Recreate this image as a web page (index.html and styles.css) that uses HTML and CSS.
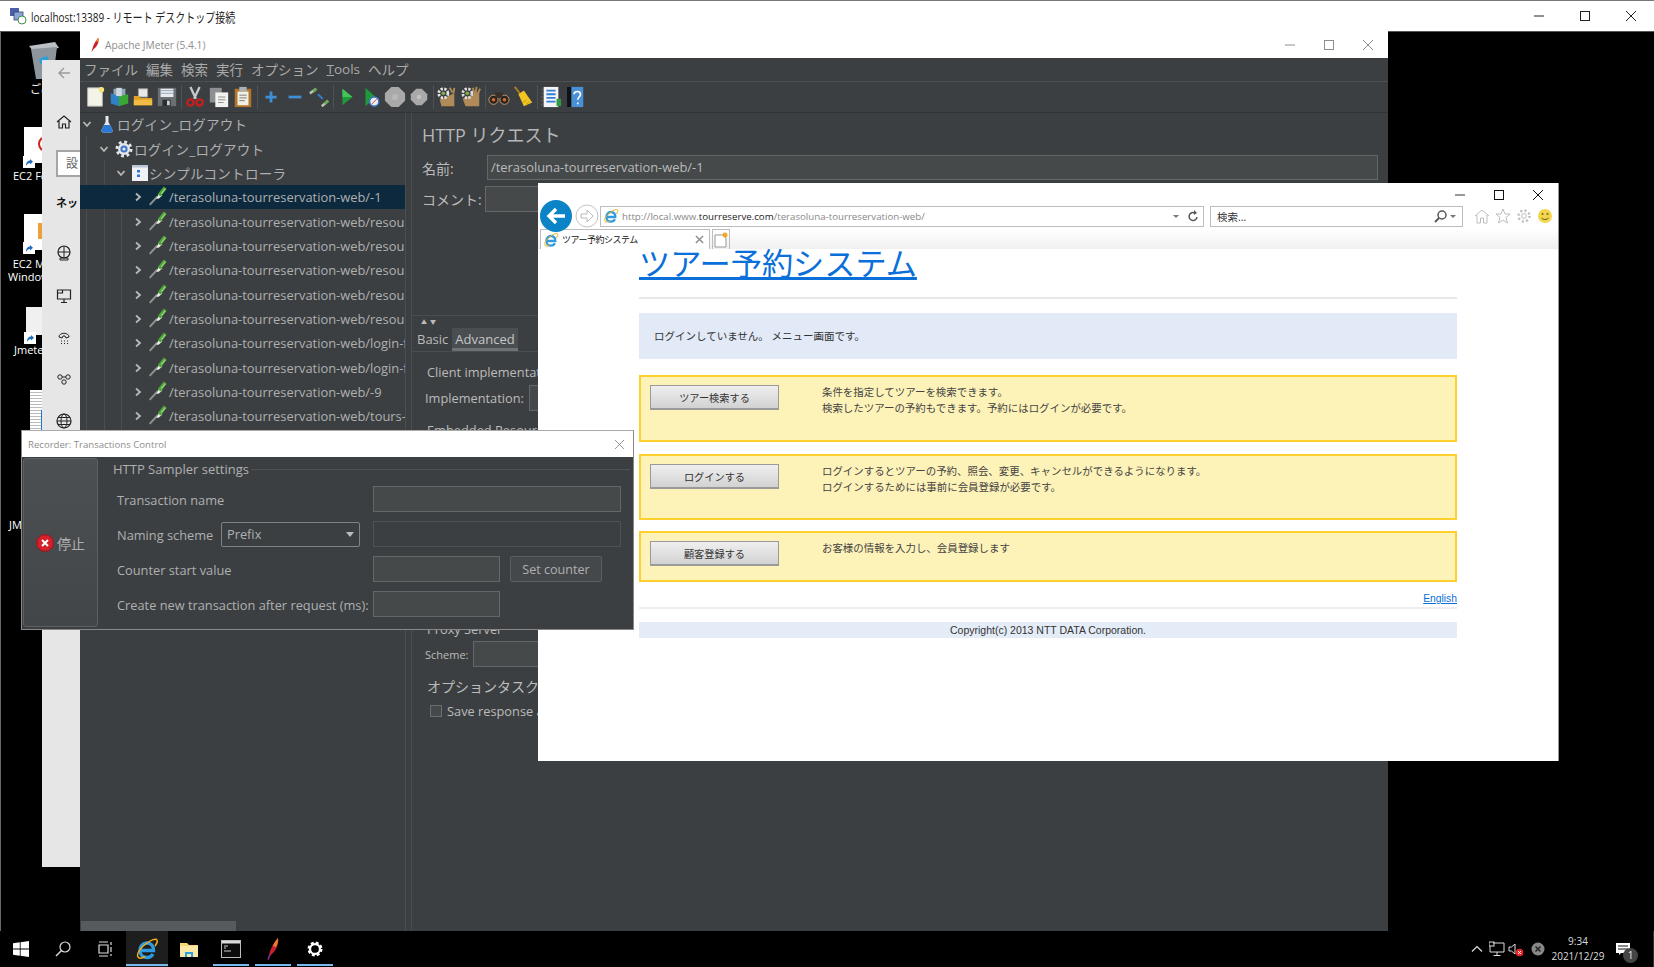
FILE: index.html
```html
<!DOCTYPE html>
<html lang="ja">
<head>
    <meta charset="utf-8">
    <title>localhost:13389 - リモート デスクトップ接続</title>
    <link rel="stylesheet" href="styles.css">
</head>
<body>
    <svg class="defs" width="0" height="0">
        <symbol id="ie" viewBox="0 0 24 24">
            <path d="M5 13.5h13.5c.3-4.500-2.500-7.500-6.500-7.500-4.200 0-7 3.300-7 7.500s2.900 7 7 7c2.800 0 4.800-1.300 5.900-3.500" fill="none" stroke="#2f9be0" stroke-width="3.400"/>
            <path d="M3 20c-2-3 3-10 9-14 4-3 9-5 10-3 .8 1.500-.5 4-2 6M3 20c1.500 2 4.500 1 7-.5" fill="none" stroke="#f2b21b" stroke-width="1.500"/>
        </symbol>
        <symbol id="pipette" viewBox="0 0 18 18">
            <path d="M1.500 17l7-7.500" stroke="#8f9290" stroke-width="1.800"/>
            <path d="M7.500 11.500l2-4 3.500 1-3.500 3z" fill="#e8f0e2"/>
            <path d="M10 8.500l5.500-7" stroke="#4fa53b" stroke-width="3.400"/>
            <path d="M12 7l3.500-4.500" stroke="#a8dd8f" stroke-width="1"/>
        </symbol>
        <symbol id="gear" viewBox="0 0 18 18">
            <circle cx="9" cy="9" r="7" fill="none" stroke="#e4e6ea" stroke-width="3" stroke-dasharray="2.800 2.700"/>
            <circle cx="9" cy="9" r="6" fill="#e4e6ea"/>
            <circle cx="9" cy="9" r="3.600" fill="#3f78c8"/>
            <circle cx="9" cy="9" r="1.600" fill="#dfe8f5"/>
        </symbol>
        <symbol id="chev-r" viewBox="0 0 10 10"><path d="M3 1.500L7 5 3 8.500" fill="none" stroke="#b8b8b8" stroke-width="1.800"/></symbol>
        <symbol id="chev-d" viewBox="0 0 10 10"><path d="M1.500 3L5 7l3.500-4" fill="none" stroke="#b8b8b8" stroke-width="1.800"/></symbol>
        <symbol id="shortcut" viewBox="0 0 12 12">
            <rect width="12" height="12" fill="#fff"/>
            <path d="M3 10c0-4 2-5.500 4-5.500V3l3 2.800-3 2.700V7C5.500 7 4 8 3 10z" fill="#1f6fc0"/>
        </symbol>
    </svg>

    <div class="screen">
        <div class="rdp-title">
            <svg class="rdp-logo" viewBox="0 0 18 18" width="18" height="18">
                <rect x="1" y="1" width="9" height="8" fill="#4a5fa8"/>
                <rect x="5" y="5" width="9" height="8" fill="#8aa3d8" stroke="#39476f" stroke-width=".8"/>
                <circle cx="13" cy="13" r="4" fill="#fff" stroke="#3f8f3f"/>
            </svg>
            <span class="rdp-name">localhost:13389 - リモート デスクトップ接続</span>
            <div class="rdp-controls">
                <svg viewBox="0 0 12 12" width="12" height="12"><path d="M1 6h10" stroke="#222"/></svg>
                <svg viewBox="0 0 12 12" width="12" height="12"><rect x="1.500" y="1.500" width="9" height="9" fill="none" stroke="#222"/></svg>
                <svg viewBox="0 0 12 12" width="12" height="12"><path d="M1 1l10 10M11 1L1 11" stroke="#222"/></svg>
            </div>
        </div>
        <div class="desktop"></div>

        <!-- デスクトップアイコン -->
        <svg class="desk-icon bin" viewBox="0 0 34 40" width="34" height="40">
            <path d="M2 6l26-4 4 6-26 3z" fill="#b9bfc4"/>
            <path d="M4 9l26-2-4 32H9z" fill="#8d969c"/>
            <path d="M14 18l6-2 2 5-3 4-5-1-2-4z" fill="#2a9fd8"/>
        </svg>
        <span class="desk-label l-bin">ごみ</span>
        <div class="desk-icon doc d-fe"><span class="o-mark"></span></div>
        <svg class="desk-icon sc s-fe" width="12" height="12"><use href="#shortcut"/></svg>
        <span class="desk-label l-fe">EC2 Fe</span>
        <div class="desk-icon doc d-m"><span class="orange"></span></div>
        <svg class="desk-icon sc s-m" width="12" height="12"><use href="#shortcut"/></svg>
        <span class="desk-label l-m">EC2 M<br>Window</span>
        <div class="desk-icon doc d-j"></div>
        <svg class="desk-icon sc s-j" width="12" height="12"><use href="#shortcut"/></svg>
        <span class="desk-label l-j">Jmeter</span>
        <div class="desk-icon lined"></div>
        <div class="desk-icon bluebar"></div>
        <span class="desk-label l-jm">JM</span>

        <!-- 設定ウィンドウ(奥) -->
        <div class="win settings-win">
            <svg class="set-icon" viewBox="0 0 16 24" width="16" height="24"><path d="M14 12H3m5-5l-5 5 5 5" fill="none" stroke="#9a9a9a" stroke-width="1.400"/></svg>
            <svg class="set-icon set-home" viewBox="0 0 16 24" width="16" height="24"><path d="M1 12l7-6 7 6M3 11v7h3.500v-4h3v4H13v-7" fill="none" stroke="#222" stroke-width="1.200"/></svg>
            <div class="set-search">設</div>
            <div class="set-head">ネット</div>
            <div class="set-nav">
                <svg viewBox="0 0 16 24" width="16" height="24"><circle cx="8" cy="11" r="6" fill="none" stroke="#222" stroke-width="1.200"/><path d="M2 11h12M8 5v12M4 17h8v2H4z" fill="none" stroke="#222"/></svg>
                <svg viewBox="0 0 16 24" width="16" height="24"><path d="M1.500 7h13v9h-13zM8 16v3M5 19.500h6M1.500 7h5v3h-5z" fill="none" stroke="#222" stroke-width="1.200"/></svg>
                <svg viewBox="0 0 16 24" width="16" height="24"><path d="M3 12c0-5 10-5 10 0l-3 1-1-2H7l-1 2zM5 16h1m2 0h1m2 0h1M5 18.500h1m2 0h1m2 0h1" fill="none" stroke="#222"/></svg>
                <svg viewBox="0 0 16 24" width="16" height="24"><circle cx="4" cy="10" r="2.200" fill="none" stroke="#222"/><circle cx="12" cy="10" r="2.200" fill="none" stroke="#222"/><circle cx="8" cy="15" r="2.200" fill="none" stroke="#222"/><path d="M6 10h4" stroke="#222"/></svg>
                <svg viewBox="0 0 16 24" width="16" height="24"><circle cx="8" cy="12" r="7" fill="none" stroke="#222" stroke-width="1.200"/><ellipse cx="8" cy="12" rx="3" ry="7" fill="none" stroke="#222"/><path d="M1 12h14M2 8.500h12M2 15.500h12" stroke="#222"/></svg>
            </div>
        </div>

        <!-- JMeter -->
        <div class="win jmeter">
            <div class="jm-title">
                <svg class="feather" viewBox="0 0 14 20" width="12" height="17"><path d="M3 19c1-6 4-13 8-17 1 5-1 10-6 14z" fill="#c8202f"/><path d="M8 6c1-2 2-3 3-4 .5 2 0 3-1 5z" fill="#e9872a"/></svg>
                <span>Apache JMeter (5.4.1)</span>
                <div class="jm-controls">
                    <svg viewBox="0 0 12 12" width="12" height="12"><path d="M1 6h10" stroke="#8e8e8e"/></svg>
                    <svg viewBox="0 0 12 12" width="12" height="12"><rect x="1.500" y="1.500" width="9" height="9" fill="none" stroke="#8e8e8e"/></svg>
                    <svg viewBox="0 0 12 12" width="12" height="12"><path d="M1 1l10 10M11 1L1 11" stroke="#8e8e8e"/></svg>
                </div>
            </div>
            <div class="jm-menu">
                <span>ファイル</span><span>編集</span><span>検索</span><span>実行</span><span>オプション</span><span><u>T</u>ools</span><span>ヘルプ</span>
            </div>
            <div class="jm-toolbar">
                <svg viewBox="0 0 24 24"><path d="M4 2h16v20H4z" fill="#f4f3e8" stroke="#bbb"/><circle cx="19" cy="4" r="3" fill="#f6e27a"/></svg>
                <svg viewBox="0 0 24 24"><path d="M6 3h13v8H6z" fill="#8ea6bd"/><path d="M3 8l9 3v11l-9-3z" fill="#2f80c4"/><path d="M12 11l10-2v10l-10 3z" fill="#38a832"/><path d="M9 2h6v9H9z" fill="#cfd8df"/></svg>
                <svg viewBox="0 0 24 24"><path d="M7 3h10v9H7z" fill="#e8e8e8" stroke="#999"/><path d="M2 11h6l1 2h13v8H2z" fill="#e0a126"/><path d="M2 15h20v6H2z" fill="#f3bc45"/></svg>
                <svg viewBox="0 0 24 24"><path d="M2 2h20v20H2z" fill="#6b6f73"/><path d="M5 3h14v9H5z" fill="#e8eaec"/><path d="M5 5h14M5 8h14" stroke="#8fa6bd"/><path d="M7 15h9v7H7z" fill="#2b2d2f"/><rect x="12" y="16" width="3" height="5" fill="#cfd2d5"/></svg>
                <i class="sep"></i>
                <svg viewBox="0 0 24 24"><path d="M7 1l6 13M17 1l-6 13" stroke="#c6cacd" stroke-width="2.500"/><circle cx="7" cy="18" r="3.500" fill="none" stroke="#c81e1e" stroke-width="2.500"/><circle cx="17" cy="18" r="3.500" fill="none" stroke="#c81e1e" stroke-width="2.500"/></svg>
                <svg viewBox="0 0 24 24"><path d="M2 2h13v16H2z" fill="#8d9093"/><path d="M8 7h14v16H8z" fill="#f2f2f0"/><path d="M11 12h8M11 15h8M11 18h6" stroke="#888"/></svg>
                <svg viewBox="0 0 24 24"><path d="M3 3h18v20H3z" fill="#b27428"/><path d="M6 6h12v15H6z" fill="#f2f0e4"/><path d="M8 10h8M8 13h8M8 16h6" stroke="#777"/><path d="M8 1h8v5H8z" fill="#aab0b5"/></svg>
                <i class="sep"></i>
                <svg viewBox="0 0 24 24"><path d="M12 6v12M6 12h12" stroke="#3f8fd6" stroke-width="3"/></svg>
                <svg viewBox="0 0 24 24"><path d="M5 12h14" stroke="#3f8fd6" stroke-width="3"/></svg>
                <svg viewBox="0 0 24 24"><path d="M2 8l7-5M15 22l7-6" stroke="#b7c2b0" stroke-width="2.800"/><path d="M6 6l3-3M18 19l4-3" stroke="#6aa84f" stroke-width="2.800"/><path d="M11 9l5 5" stroke="#2f80d6" stroke-width="2"/></svg>
                <i class="sep"></i>
                <svg viewBox="0 0 24 24"><path d="M7 3l11 9-11 9z" fill="#1f9a3a"/><path d="M7 3l11 9H7z" fill="#43c35a"/></svg>
                <svg viewBox="0 0 24 24"><path d="M6 2l11 10L6 22z" fill="#1f9a3a"/><circle cx="15.500" cy="17" r="5" fill="#e9eef5" stroke="#3a74c8" stroke-width="1.600"/><path d="M12.500 20l6-6" stroke="#d33"/></svg>
                <svg viewBox="0 0 24 24"><path d="M8 1h8l7 7v8l-7 7H8l-7-7V8z" fill="#a9a9a9"/><path d="M9 9h6v6H9z" fill="#b8b8b8"/></svg>
                <svg viewBox="0 0 24 24"><path d="M9 3h6l6 6v6l-6 6H9l-6-6V9z" fill="#a9a9a9"/><circle cx="12" cy="12" r="2.500" fill="#c2c2c2"/></svg>
                <i class="sep"></i>
                <svg viewBox="0 0 24 24"><path d="M4 15L20 8v14H6z" fill="#b08a58"/><circle cx="8" cy="8" r="5" fill="none" stroke="#e4e4e4" stroke-width="3" stroke-dasharray="2.500 1.500"/><circle cx="8" cy="8" r="2" fill="#7fb04b"/><path d="M15 2l3 5M20 2l-1 6" stroke="#b08a58" stroke-width="2"/></svg>
                <svg viewBox="0 0 24 24"><path d="M3 14L21 6v16H6z" fill="#b08a58"/><circle cx="8" cy="8" r="5" fill="none" stroke="#dcdcdc" stroke-width="3" stroke-dasharray="2.500 1.500"/><circle cx="8" cy="8" r="2" fill="#7fb04b"/><path d="M14 2l2 7M18 1l-1 8M22 3l-3 6" stroke="#b08a58" stroke-width="2"/></svg>
                <i class="sep"></i>
                <svg viewBox="0 0 24 24"><circle cx="6" cy="15" r="5" fill="#2b2320" stroke="#caa27a"/><circle cx="18" cy="15" r="5" fill="#2b2320" stroke="#caa27a"/><circle cx="6" cy="15" r="2" fill="#d8692b"/><circle cx="18" cy="15" r="2" fill="#d8692b"/><path d="M8 7h8v6H8z" fill="#3a2f2a"/></svg>
                <svg viewBox="0 0 24 24"><path d="M3 1l7 9" stroke="#a9782c" stroke-width="2.200"/><path d="M7 9l6-4 9 13-9 4z" fill="#f2c522"/><path d="M12 18l4-3M15 20l4-3" stroke="#c8960c"/></svg>
                <i class="sep"></i>
                <svg viewBox="0 0 24 24"><path d="M4 1h16v22H4z" fill="#f4f4f4"/><path d="M7 5h10M7 9h10M7 13h10M7 17h10" stroke="#2f7fd6" stroke-width="2"/><path d="M2 3v18" stroke="#555" stroke-width="2" stroke-dasharray="2 2"/><path d="M18 14h5v8h-5z" fill="#2f9a45"/></svg>
                <svg viewBox="0 0 24 24"><path d="M3 1h18v22H3z" fill="#4a90d6"/><path d="M3 1h5v22H3z" fill="#111"/><path d="M11 9c0-4 7-4 7 0 0 3-3 3-3 6M15 18v2" fill="none" stroke="#fff" stroke-width="1.800"/></svg>
            </div>
            <div class="jm-main">
                <div class="tree">
                    <div class="tree-row lv-0"><svg class="tw" width="10" height="10"><use href="#chev-d"/></svg><svg class="ti" viewBox="0 0 18 18" width="18" height="18"><path d="M7.500 1h3v6l4 8c.4 1.500-.5 2.500-1.500 2.500H5c-1 0-2-1-1.500-2.500l4-8z" fill="#e6e9ee"/><path d="M6 10h6l2.500 5c.4 1.500-.5 2.500-1.500 2.500H5c-1 0-2-1-1.500-2.500z" fill="#2a78d6"/></svg>ログイン_ログアウト</div>
                    <div class="tree-row lv-1"><svg class="tw" width="10" height="10"><use href="#chev-d"/></svg><svg class="ti" width="18" height="18"><use href="#gear"/></svg>ログイン_ログアウト</div>
                    <div class="tree-row lv-2"><svg class="tw" width="10" height="10"><use href="#chev-d"/></svg><svg class="ti" viewBox="0 0 16 16" width="16" height="16"><rect x="0" y="0" width="16" height="16" fill="#f0f2f5"/><rect x="0" y="0" width="16" height="2.500" fill="#b9c6d6"/><path d="M5 5h3v2.500H5zM5 9.500h3V12H5z" fill="#2a78d6"/></svg>シンプルコントローラ</div>
                    <div class="tree-row lv-3 selected"><svg class="tw" width="10" height="10"><use href="#chev-r"/></svg><svg class="ti" width="18" height="18"><use href="#pipette"/></svg>/terasoluna-tourreservation-web/-1</div>
                    <div class="tree-row lv-3"><svg class="tw" width="10" height="10"><use href="#chev-r"/></svg><svg class="ti" width="18" height="18"><use href="#pipette"/></svg>/terasoluna-tourreservation-web/resources/app</div>
                    <div class="tree-row lv-3"><svg class="tw" width="10" height="10"><use href="#chev-r"/></svg><svg class="ti" width="18" height="18"><use href="#pipette"/></svg>/terasoluna-tourreservation-web/resources/app</div>
                    <div class="tree-row lv-3"><svg class="tw" width="10" height="10"><use href="#chev-r"/></svg><svg class="ti" width="18" height="18"><use href="#pipette"/></svg>/terasoluna-tourreservation-web/resources/app</div>
                    <div class="tree-row lv-3"><svg class="tw" width="10" height="10"><use href="#chev-r"/></svg><svg class="ti" width="18" height="18"><use href="#pipette"/></svg>/terasoluna-tourreservation-web/resources/app</div>
                    <div class="tree-row lv-3"><svg class="tw" width="10" height="10"><use href="#chev-r"/></svg><svg class="ti" width="18" height="18"><use href="#pipette"/></svg>/terasoluna-tourreservation-web/resources/app</div>
                    <div class="tree-row lv-3"><svg class="tw" width="10" height="10"><use href="#chev-r"/></svg><svg class="ti" width="18" height="18"><use href="#pipette"/></svg>/terasoluna-tourreservation-web/login-form</div>
                    <div class="tree-row lv-3"><svg class="tw" width="10" height="10"><use href="#chev-r"/></svg><svg class="ti" width="18" height="18"><use href="#pipette"/></svg>/terasoluna-tourreservation-web/login-form</div>
                    <div class="tree-row lv-3"><svg class="tw" width="10" height="10"><use href="#chev-r"/></svg><svg class="ti" width="18" height="18"><use href="#pipette"/></svg>/terasoluna-tourreservation-web/-9</div>
                    <div class="tree-row lv-3"><svg class="tw" width="10" height="10"><use href="#chev-r"/></svg><svg class="ti" width="18" height="18"><use href="#pipette"/></svg>/terasoluna-tourreservation-web/tours-search</div>
                    <div class="tree-scroll"></div>
                </div>
                <div class="splitter"></div>
                <div class="pane">
                    <h2 class="pane-title">HTTP リクエスト</h2>
                    <div class="pane-field name-field">
                        <label class="name-label">名前:</label>
                        <div class="dark-input name-input">/terasoluna-tourreservation-web/-1</div>
                    </div>
                    <div class="pane-field comment-field">
                        <label class="comment-label">コメント:</label>
                        <div class="dark-input comment-input"></div>
                    </div>
                    <div class="pane-divider"><span>▲</span><span>▼</span></div>
                    <div class="tabs">
                        <span class="tab">Basic</span>
                        <span class="tab active">Advanced</span>
                    </div>
                    <div class="group-title client-title">Client implementation</div>
                    <div class="pane-field impl-field">
                        <label class="impl-label">Implementation:</label>
                        <div class="dark-input small-input"></div>
                    </div>
                    <div class="group-title embedded-title">Embedded Resources</div>
                    <div class="group-title proxy-title">Proxy Server</div>
                    <div class="pane-field scheme-field">
                        <label class="scheme-label">Scheme:</label>
                        <div class="dark-input small-input"></div>
                    </div>
                    <div class="group-title option-title">オプションタスク</div>
                    <div class="check-row"><i class="checkbox"></i>Save response as MD5 hash?</div>
                </div>
            </div>
        </div>

        <!-- IE -->
        <div class="win browser">
            <div class="ie-caption">
                <svg viewBox="0 0 12 12" width="12" height="12"><path d="M1 6h10" stroke="#333"/></svg>
                <svg viewBox="0 0 12 12" width="12" height="12"><rect x="1.500" y="1.500" width="9" height="9" fill="none" stroke="#111"/></svg>
                <svg viewBox="0 0 12 12" width="12" height="12"><path d="M1 1l10 10M11 1L1 11" stroke="#111"/></svg>
            </div>
            <div class="ie-nav">
                <svg class="ie-back" viewBox="0 0 32 32" width="32" height="32"><circle cx="16" cy="16" r="16" fill="#0a84c6"/><path d="M25 16H9m7-7l-7 7 7 7" fill="none" stroke="#fff" stroke-width="3.400"/></svg>
                <svg class="ie-forward" viewBox="0 0 24 24" width="24" height="24"><circle cx="12" cy="12" r="11" fill="#fff" stroke="#c4c4c4"/><path d="M6 10h6V6l6 6-6 6v-4H6z" fill="none" stroke="#b8b8b8"/></svg>
                <div class="ie-address">
                    <svg width="16" height="16"><use href="#ie"/></svg>
                    <span class="url">http://local.www.<b>tourreserve.com</b>/terasoluna-tourreservation-web/</span>
                    <svg viewBox="0 0 10 10" width="10" height="10"><path d="M2 4h6L5 7z" fill="#777"/></svg>
                    <svg class="ie-reload" viewBox="0 0 12 12" width="12" height="12"><path d="M10 7a4 4 0 1 1-2-4" fill="none" stroke="#555" stroke-width="1.500"/><path d="M7 0l3 3-3 2z" fill="#555"/></svg>
                </div>
                <div class="ie-search">
                    <span>検索...</span>
                    <svg viewBox="0 0 14 14" width="14" height="14"><circle cx="8" cy="6" r="4" fill="none" stroke="#555" stroke-width="1.500"/><path d="M5 9l-4 4" stroke="#555" stroke-width="1.800"/></svg>
                    <svg viewBox="0 0 10 10" width="10" height="10"><path d="M2 4h6L5 7z" fill="#777"/></svg>
                </div>
                <div class="ie-tools">
                    <svg viewBox="0 0 16 16" width="16" height="16"><path d="M1 8l7-6 7 6M3 7v8h3.500v-5h3v5H13V7" fill="none" stroke="#bdbdbd"/></svg>
                    <svg viewBox="0 0 16 16" width="16" height="16"><path d="M8 1l2 5h5l-4 3.500 1.500 5.500L8 12l-4.500 3L5 9.500 1 6h5z" fill="none" stroke="#bdbdbd"/></svg>
                    <svg viewBox="0 0 16 16" width="16" height="16"><circle cx="8" cy="8" r="5.500" fill="none" stroke="#bdbdbd" stroke-width="2.400" stroke-dasharray="2 2.300"/><circle cx="8" cy="8" r="2.400" fill="none" stroke="#bdbdbd"/></svg>
                    <svg viewBox="0 0 16 16" width="16" height="16"><circle cx="8" cy="8" r="7" fill="#f2d64b"/><circle cx="5.500" cy="6" r="1" fill="#6d6420"/><circle cx="10.500" cy="6" r="1" fill="#6d6420"/><path d="M4.500 10c1.500 2 5.500 2 7 0" fill="none" stroke="#6d6420"/></svg>
                </div>
            </div>
            <div class="ie-tabs">
                <div class="ie-tab">
                    <svg width="16" height="16"><use href="#ie"/></svg>
                    <span>ツアー予約システム</span>
                    <svg class="ie-tab-close" viewBox="0 0 10 10" width="9" height="9"><path d="M1 1l8 8M9 1L1 9" stroke="#8a8a8a" stroke-width="1.500"/></svg>
                </div>
                <div class="ie-newtab"><svg viewBox="0 0 14 16" width="14" height="16"><path d="M1 3h8l3 3v9H1z" fill="#fff" stroke="#999"/><circle cx="11" cy="3" r="2.500" fill="#f5a623"/></svg></div>
            </div>
            <div class="ie-page">
                <div class="site">
                    <h1 class="site-title"><a href="#">ツアー予約システム</a></h1>
                    <p class="notice">ログインしていません。 メニュー画面です。</p>
                    <div class="menu-card card-a">
                        <button class="menu-btn">ツアー検索する</button>
                        <p>条件を指定してツアーを検索できます。<br>検索したツアーの予約もできます。予約にはログインが必要です。</p>
                    </div>
                    <div class="menu-card card-b">
                        <button class="menu-btn">ログインする</button>
                        <p>ログインするとツアーの予約、照会、変更、キャンセルができるようになります。<br>ログインするためには事前に会員登録が必要です。</p>
                    </div>
                    <div class="menu-card card-c">
                        <button class="menu-btn">顧客登録する</button>
                        <p>お客様の情報を入力し、会員登録します</p>
                    </div>
                    <div class="lang"><a href="#">English</a></div>
                    <div class="copyright">Copyright(c) 2013 NTT DATA Corporation.</div>
                </div>
            </div>
        </div>

        <!-- Recorder -->
        <div class="win recorder">
            <div class="rec-title">
                <span>Recorder: Transactions Control</span>
                <svg viewBox="0 0 12 12" width="11" height="11"><path d="M1 1l10 10M11 1L1 11" stroke="#8e8e8e"/></svg>
            </div>
            <div class="rec-body">
                <div class="stop-btn">
                    <svg viewBox="0 0 18 18" width="18" height="18"><path d="M5.500 1h7L17 5.500v7L12.500 17h-7L1 12.500v-7z" fill="#d3202a" stroke="#a31018"/><path d="M6 6l6 6M12 6l-6 6" stroke="#fff" stroke-width="2"/></svg>
                    <span>停止</span>
                </div>
                <div class="rec-settings">
                    <div class="legend"><span>HTTP Sampler settings</span></div>
                    <div class="rec-row first">
                        <label>Transaction name</label>
                        <div class="dark-input wide"></div>
                    </div>
                    <div class="rec-row">
                        <label class="with-select">Naming scheme
                            <span class="select">Prefix<svg viewBox="0 0 10 10" width="10" height="10"><path d="M1 3h8L5 8z" fill="#bbb"/></svg></span>
                        </label>
                        <div class="dark-input wide flat"></div>
                    </div>
                    <div class="rec-row">
                        <label>Counter start value</label>
                        <div class="dark-input short"></div>
                        <button class="set-counter">Set counter</button>
                    </div>
                    <div class="rec-row">
                        <label>Create new transaction after request (ms):</label>
                        <div class="dark-input short"></div>
                    </div>
                </div>
            </div>
        </div>

        <!-- タスクバー -->
        <div class="taskbar">
            <div class="tb-item">
                <svg viewBox="0 0 16 16" width="16" height="16"><path d="M0 2.300L6.800 1.300V7.600H0zM7.600 1.200L16 0V7.600H7.600zM0 8.400H6.800V14.700L0 13.700zM7.600 8.400H16V16L7.600 14.800z" fill="#fff"/></svg>
            </div>
            <div class="tb-item">
                <svg viewBox="0 0 16 16" width="16" height="16"><circle cx="10" cy="6" r="5" fill="none" stroke="#ddd" stroke-width="1.200"/><path d="M6.500 9.500L1 15" stroke="#ddd" stroke-width="1.400"/></svg>
            </div>
            <div class="tb-item">
                <svg viewBox="0 0 16 16" width="16" height="16"><path d="M2 4h9v8H2zM2 1h9M2 15h9M14 1v3M14 6v5M14 13v2" fill="none" stroke="#ddd" stroke-width="1.200"/></svg>
            </div>
            <div class="tb-item active running"><svg width="24" height="24"><use href="#ie"/></svg></div>
            <div class="tb-item">
                <svg viewBox="0 0 20 18" width="20" height="18"><path d="M1 3h7l2 2h9v12H1z" fill="#f7d774"/><path d="M1 6h18v11H1z" fill="#fbe8a6"/><path d="M6 12h8v5H6z" fill="#2d9fe0"/><path d="M8 14h4v3H8z" fill="#fbe8a6"/></svg>
            </div>
            <div class="tb-item running">
                <svg viewBox="0 0 20 18" width="20" height="18"><rect x=".5" y=".5" width="19" height="17" fill="#0c0c0c" stroke="#bbb"/><rect x="1" y="1" width="18" height="2.500" fill="#ddd"/><path d="M3 6h4M3 8h2M3 11h7" stroke="#ccc"/></svg>
            </div>
            <div class="tb-item running">
                <svg viewBox="0 0 14 24" width="14" height="24"><path d="M2 23c1-7 4-16 10-22 1 6-2 13-7 17z" fill="#c8202f"/><path d="M7 9c1-3 3-6 5-8 .5 3-.5 6-2 9z" fill="#ea7e2c"/><path d="M2 23l2-6" stroke="#6a2a8a" stroke-width="1.500"/></svg>
            </div>
            <div class="tb-item running">
                <svg viewBox="0 0 20 20" width="18" height="18"><circle cx="10" cy="10" r="6.500" fill="none" stroke="#fff" stroke-width="3.600" stroke-dasharray="3 2.100"/><circle cx="10" cy="10" r="5.500" fill="none" stroke="#fff" stroke-width="2.400"/></svg>
            </div>
            <div class="tray">
                <div class="tray-item w20"><svg viewBox="0 0 12 12" width="12" height="12"><path d="M1 8.500L6 3.500l5 5" fill="none" stroke="#ddd" stroke-width="1.200"/></svg></div>
                <div class="tray-item w20"><svg viewBox="0 0 16 16" width="16" height="16"><path d="M4 2h11v9H1V5M8 11v3M4.500 14.500h7" fill="none" stroke="#ddd"/><rect x="0" y="1" width="5" height="4" fill="none" stroke="#ddd"/></svg></div>
                <div class="tray-item w18"><svg viewBox="0 0 16 16" width="16" height="16"><path d="M1 6h2.500L7 3v10L3.500 10H1z" fill="none" stroke="#ddd"/><circle cx="11.500" cy="11.500" r="3.800" fill="#e22"/><path d="M10 10l3 3M13 10l-3 3" stroke="#fff"/></svg></div>
                <div class="tray-item w26"><svg viewBox="0 0 14 14" width="14" height="14"><circle cx="7" cy="7" r="6.500" fill="#888"/><path d="M4.500 4.500l5 5M9.500 4.500l-5 5" stroke="#222" stroke-width="1.500"/></svg></div>
                <div class="clock"><span>9:34</span><span>2021/12/29</span></div>
                <div class="tray-notify">
                    <svg viewBox="0 0 16 16" width="16" height="16"><path d="M1 2h14v10H6l-2 2v-2H1z" fill="#fff"/><path d="M3 5h10M3 8h10" stroke="#111"/></svg>
                    <span class="notify-badge">1</span>
                </div>
            </div>
        </div>
    </div>
</body>
</html>
```

FILE: styles.css
```css
* {
    box-sizing: border-box;
}

html, body {
    margin: 0;
    padding: 0;
    overflow: hidden;
}

.defs {
    position: absolute;
}

.screen {
    position: relative;
    display: flex;
    flex-direction: column;
    width: 1654px;
    height: 967px;
    font-family: "Open Sans", "Noto Sans CJK JP", sans-serif;
    overflow: hidden;
}

/* リモートデスクトップの枠 */
.rdp-title {
    display: flex;
    align-items: center;
    height: 32px;
    flex: none;
    padding-left: 9px;
    background: #fff;
    border-top: 1px solid #777;
    border-bottom: 1px solid #555;
    font-size: 13px;
    color: #222;
}

.rdp-logo {
    margin-right: 4px;
}

.rdp-name {
    display: inline-block;
    transform: scaleX(.77);
    transform-origin: left center;
    white-space: nowrap;
}

.rdp-controls {
    display: flex;
    gap: 34px;
    margin-left: auto;
    margin-right: 17px;
}

.desktop {
    flex: 1;
    background: #000;
    border-left: 1px solid #666;
}

.desk-icon {
    position: absolute;
}

.bin {
    left: 27px;
    top: 40px;
}

.doc {
    background: #fff;
    overflow: hidden;
}

.d-fe {
    left: 24px;
    top: 127px;
    width: 30px;
    height: 36px;
}

.o-mark {
    position: absolute;
    left: 14px;
    top: 9px;
    width: 16px;
    height: 16px;
    border: 2px solid #d0201f;
    border-radius: 50%;
}

.d-m {
    left: 24px;
    top: 214px;
    width: 30px;
    height: 36px;
}

.orange {
    position: absolute;
    left: 14px;
    top: 9px;
    width: 14px;
    height: 16px;
    background: #e9a23b;
}

.d-j {
    left: 26px;
    top: 307px;
    width: 30px;
    height: 28px;
    background: #f0f0f0;
}

.s-fe {
    left: 23px;
    top: 156px;
}

.s-m {
    left: 23px;
    top: 242px;
}

.s-j {
    left: 24px;
    top: 332px;
}

.lined {
    left: 30px;
    top: 390px;
    width: 20px;
    height: 40px;
    background: repeating-linear-gradient(#fff 0 2px, #bbb 2px 3px);
}

.bluebar {
    left: 41px;
    top: 410px;
    width: 5px;
    height: 21px;
    background: #1a78d0;
}

.desk-label {
    position: absolute;
    color: #fff;
    font-size: 11px;
    line-height: 13px;
    white-space: nowrap;
}

.l-bin {
    left: 30px;
    top: 82px;
}

.l-fe {
    left: 13px;
    top: 169px;
}

.l-m {
    left: 8px;
    top: 257px;
    text-align: center;
}

.l-j {
    left: 14px;
    top: 343px;
}

.l-jm {
    left: 9px;
    top: 518px;
}

.win {
    position: absolute;
}

/* 設定ウィンドウ */
.settings-win {
    left: 42px;
    top: 60px;
    width: 60px;
    height: 807px;
    padding: 1px 0 0 14px;
    background: #e6e6e6;
}

.set-icon {
    display: block;
}

.set-home {
    margin-top: 25px;
}

.set-search {
    width: 40px;
    height: 27px;
    margin: 16px 0 0 0;
    padding-left: 8px;
    border: 2px solid #a5a5a5;
    background: #fff;
    font-size: 12px;
    line-height: 23px;
    color: #666;
}

.set-head {
    height: 24px;
    margin: 14px 0 0 0;
    font-size: 11px;
    font-weight: 700;
    line-height: 24px;
    color: #111;
    white-space: nowrap;
}

.set-nav {
    display: flex;
    flex-direction: column;
    gap: 18px;
    margin-top: 26px;
}

.set-nav svg {
    display: block;
}

/* JMeter */
.jmeter {
    left: 80px;
    top: 31px;
    width: 1308px;
    height: 900px;
    display: flex;
    flex-direction: column;
    background: #3c3f41;
    color: #bbb;
}

.jm-title {
    display: flex;
    align-items: center;
    flex: none;
    height: 27px;
    padding-left: 9px;
    background: #fff;
    font-size: 10.2px;
    color: #8e8e8e;
}

.feather {
    margin-right: 4px;
}

.jm-controls {
    display: flex;
    gap: 27px;
    margin-left: auto;
    margin-right: 14px;
}

.jm-menu {
    display: flex;
    align-items: center;
    gap: 8px;
    flex: none;
    height: 24px;
    padding: 0 0 2px 4px;
    border-bottom: 1px solid #4d5052;
    font-size: 13.5px;
    color: #aaa;
}

.jm-toolbar {
    display: flex;
    align-items: center;
    flex: none;
    height: 31px;
    padding-left: 3px;
    border-bottom: 1px solid #333;
}

.jm-toolbar svg {
    width: 22px;
    height: 22px;
    margin: 0 1px;
}

.jm-toolbar .sep {
    width: 1px;
    height: 24px;
    margin: 0 1px 0 2px;
    background: #505355;
}

.jm-main {
    display: flex;
    flex: 1;
    min-height: 0;
}

.tree {
    position: relative;
    flex: none;
    width: 325px;
    overflow: hidden;
    margin-top: -1px;
    background:
        linear-gradient(#4b4e50, #4b4e50) 6px 24px / 1px 300px no-repeat,
        linear-gradient(#4b4e50, #4b4e50) 24px 48px / 1px 276px no-repeat,
        linear-gradient(#4b4e50, #4b4e50) 41px 72px / 1px 252px no-repeat;
}

.tree-row {
    display: flex;
    align-items: center;
    height: 24.35px;
    font-size: 13.5px;
    letter-spacing: .3px;
    white-space: nowrap;
    color: #aeb0b2;
}

.tree-row.lv-3 {
    font-size: 12.9px;
    letter-spacing: 0;
}

.tree-row.selected {
    background: #0d293e;
}

.lv-0 {
    padding-left: 2px;
}

.lv-1 {
    padding-left: 19px;
}

.lv-2 {
    padding-left: 36px;
}

.lv-3 {
    padding-left: 53px;
}

.tw {
    flex: none;
    margin-right: 6px;
}

.ti {
    flex: none;
    margin-right: 1px;
}

.lv-3 .ti {
    width: 20px;
    height: 20px;
    margin: -2px 1px 0 -1px;
}

.tree-scroll {
    position: absolute;
    left: 1px;
    bottom: 0;
    width: 155px;
    height: 10px;
    background: #585b5d;
}

.splitter {
    flex: none;
    width: 7px;
    border-left: 1px solid #4b4e50;
    border-right: 1px solid #4b4e50;
}

.pane {
    flex: 1;
    min-width: 0;
    padding: 10px 10px 0 0;
    overflow: hidden;
}

.pane-title {
    margin: 0 0 0 10px;
    font-size: 18px;
    font-weight: 400;
    line-height: 24px;
    color: #b4b6b8;
}

.pane-field {
    display: flex;
    align-items: center;
    padding-left: 10px;
    font-size: 14px;
}

.pane-field label {
    flex: none;
    white-space: nowrap;
}

.dark-input {
    height: 25px;
    border: 1px solid #646769;
    background: #45494a;
}

.name-field {
    margin-top: 8px;
}

.name-label {
    width: 65px;
}

.name-input {
    flex: 1;
    padding-left: 3px;
    font-size: 12.9px;
    line-height: 23px;
}

.comment-field {
    margin-top: 6px;
}

.comment-label {
    width: 63px;
}

.comment-input {
    flex: 1;
    height: 26px;
}

.pane-divider {
    display: flex;
    gap: 3px;
    height: 13px;
    margin-top: 103px;
    margin-right: -10px;
    padding-left: 9px;
    border-top: 1px solid #4b4e50;
    font-size: 6px;
    line-height: 12px;
}

.tabs {
    display: flex;
    align-items: stretch;
    height: 24px;
    margin-right: -10px;
    padding-left: 2px;
    border-bottom: 1px solid #4b4e50;
    font-size: 13px;
    line-height: 22px;
}

.tab {
    padding: 0 3px;
}

.tab.active {
    margin-left: 1px;
    padding: 0 3px;
    background: #4b4e50;
    border-bottom: 3px solid #6f7274;
    color: #c4c6c8;
}

.group-title {
    padding-left: 15px;
    font-size: 12.8px;
    line-height: 20px;
    white-space: nowrap;
}

.client-title {
    margin-top: 10px;
}

.impl-field {
    margin-top: 3px;
    padding-left: 13px;
    font-size: 12.8px;
}

.impl-label {
    width: 104px;
}

.small-input {
    width: 80px;
    height: 26px;
}

.embedded-title {
    margin-top: 9px;
}

.proxy-title {
    margin-top: 179px;
}

.scheme-field {
    margin-top: 2px;
    padding-left: 13px;
}

.scheme-label {
    width: 48px;
    font-size: 11px;
}

.option-title {
    margin-top: 10px;
    font-size: 14px;
}

.check-row {
    display: flex;
    align-items: center;
    margin-top: 4px;
    padding-left: 18px;
    font-size: 12.8px;
    line-height: 20px;
    white-space: nowrap;
}

.checkbox {
    width: 12px;
    height: 12px;
    margin-right: 5px;
    border: 1px solid #6b6e70;
    background: #45494a;
}

/* IE ウィンドウ */
.browser {
    left: 538px;
    top: 183px;
    width: 1021px;
    height: 578px;
    display: flex;
    flex-direction: column;
    background: #fff;
    border-right: 1px solid #999;
}

.ie-caption {
    display: flex;
    justify-content: flex-end;
    gap: 27px;
    flex: none;
    height: 20px;
    padding: 6px 14px 0 0;
}

.ie-nav {
    position: relative;
    display: flex;
    align-items: center;
    flex: none;
    height: 26px;
    padding-left: 2px;
}

.ie-back {
    flex: none;
}

.ie-forward {
    flex: none;
    margin-left: 3px;
    margin-right: 1px;
}

.ie-address {
    display: flex;
    align-items: center;
    width: 604px;
    height: 21px;
    margin-right: 6px;
    padding: 0 4px 0 2px;
    border: 1px solid #bdbdbd;
    font-size: 9.7px;
    color: #888;
}

.url {
    flex: 1;
    margin-left: 3px;
    white-space: nowrap;
}

.url b {
    font-weight: 400;
    color: #222;
}

.ie-reload {
    margin-left: 6px;
}

.ie-search {
    display: flex;
    align-items: center;
    width: 253px;
    height: 21px;
    padding: 0 4px 0 6px;
    border: 1px solid #bdbdbd;
    font-size: 10.5px;
    color: #333;
}

.ie-search span {
    flex: 1;
}

.ie-tools {
    display: flex;
    gap: 5px;
    margin-left: 11px;
}

.ie-tabs {
    display: flex;
    flex: none;
    height: 20px;
    background: linear-gradient(#fff, #f0f0f0);
}

.ie-tab {
    display: flex;
    align-items: center;
    width: 170px;
    margin-left: 2px;
    padding: 0 5px 0 2px;
    background: #fff;
    border: 1px solid #bdbdbd;
    border-bottom: 0;
    font-size: 9px;
    letter-spacing: -.5px;
    color: #111;
}

.ie-tab span {
    flex: 1;
    margin-left: 3px;
}

.ie-newtab {
    display: flex;
    align-items: center;
    justify-content: center;
    width: 18px;
    margin-left: 2px;
    border: 1px solid #bdbdbd;
    border-bottom: 0;
}

.ie-page {
    flex: 1;
    min-height: 0;
    overflow: hidden;
}

.site {
    width: 818px;
    margin: 0 auto;
    transform: translateX(0);
}

.site-title {
    height: 50px;
    margin: 0;
    border-bottom: 2px solid #e8e8e8;
    font-size: 31.2px;
    font-weight: 400;
    line-height: 28px;
}

.site-title a, .lang a {
    color: #0a6fd8;
}

.notice {
    height: 46px;
    margin: 14px 0 16px;
    padding-left: 15px;
    background: #e2e9f7;
    font-size: 10.5px;
    line-height: 46px;
    color: #333;
}

.menu-card {
    display: flex;
    align-items: flex-start;
    padding: 8px 9px;
    background: #fdf2b8;
    border: 2px solid #fdd02d;
}

.card-a {
    height: 67px;
    margin-bottom: 12px;
}

.card-b {
    height: 66px;
    margin-bottom: 11px;
}

.card-c {
    height: 51px;
}

.menu-btn {
    flex: none;
    width: 129px;
    height: 25px;
    padding: 0;
    background: linear-gradient(#efefef, #d2d2d2);
    border: 1px solid #9a9a9a;
    border-bottom-width: 2px;
    font-family: inherit;
    font-size: 10.2px;
    color: #333;
}

.menu-card p {
    margin: -1px 0 0 43px;
    font-size: 10.45px;
    line-height: 16px;
    color: #444;
}

.lang {
    height: 27px;
    padding-top: 9px;
    border-bottom: 2px solid #eee;
    font-family: "Liberation Sans", sans-serif;
    font-size: 10.3px;
    line-height: 15px;
    text-align: right;
}

.copyright {
    height: 16px;
    margin-top: 13px;
    background: #e4ecf8;
    font-family: "Liberation Sans", sans-serif;
    font-size: 10.5px;
    line-height: 16px;
    text-align: center;
    color: #333;
}

/* Recorder ダイアログ */
.recorder {
    left: 21px;
    top: 430px;
    width: 613px;
    height: 200px;
    display: flex;
    flex-direction: column;
    background: #3c3f41;
    border: 1px solid #888;
    border-top: 1px solid #aaa;
    color: #aeb0b2;
}

.rec-title {
    display: flex;
    align-items: center;
    justify-content: space-between;
    flex: none;
    height: 26px;
    padding: 0 8px 0 6px;
    background: #fff;
    font-size: 9.6px;
    color: #8e8e8e;
}

.rec-body {
    display: flex;
    flex: 1;
    min-height: 0;
    padding: 1px 3px 2px 1px;
}

.stop-btn {
    display: flex;
    align-items: center;
    justify-content: center;
    gap: 3px;
    flex: none;
    width: 75px;
    background: linear-gradient(#4c5052, #434648);
    border: 1px solid #5c6062;
    border-radius: 3px;
    font-size: 14px;
}

.rec-settings {
    flex: 1;
    min-width: 0;
    padding-left: 15px;
}

.legend {
    display: flex;
    align-items: center;
    height: 20px;
    margin-top: 1px;
    font-size: 13px;
    white-space: nowrap;
}

.legend::after {
    content: "";
    flex: 1;
    height: 1px;
    margin-left: 2px;
    background: #4f5254;
}

.rec-row {
    display: flex;
    align-items: center;
    height: 26px;
    margin-top: 9px;
    padding-left: 4px;
    font-size: 12.8px;
}

.rec-row.first {
    margin-top: 7px;
}

.rec-row > label {
    flex: none;
    display: flex;
    align-items: center;
    justify-content: space-between;
    width: 256px;
    padding: 2px 13px 0 0;
    white-space: nowrap;
}

.rec-row > label.with-select {
    gap: 0;
}

.select {
    display: flex;
    align-items: center;
    justify-content: space-between;
    width: 139px;
    height: 25px;
    margin-top: -2px;
    padding: 0 4px 0 5px;
    border: 1px solid #808386;
    border-radius: 2px;
}

.wide {
    width: 248px;
    height: 26px;
}

.flat {
    background: #3c3f41;
    border-color: #4f5254;
}

.short {
    width: 127px;
    height: 26px;
}

.set-counter {
    width: 92px;
    height: 26px;
    margin-left: 10px;
    padding: 0;
    background: #45484a;
    border: 1px solid #5c5f61;
    border-radius: 2px;
    font-family: inherit;
    font-size: 12.6px;
    color: #aeb0b2;
}

/* タスクバー */
.taskbar {
    position: absolute;
    left: 0;
    right: 0;
    bottom: 0;
    display: flex;
    height: 36px;
    background: #000;
}

.tb-item {
    position: relative;
    display: flex;
    align-items: center;
    justify-content: center;
    width: 42px;
}

.tb-item.active {
    background: #1e1e1e;
}

.tb-item.running::after {
    content: "";
    position: absolute;
    left: 3px;
    right: 3px;
    bottom: 1px;
    height: 2px;
    background: #76b9ed;
}

.tb-item.active.running::after {
    left: 0;
    right: 0;
}

.tray {
    display: flex;
    align-items: center;
    height: 100%;
    margin-left: auto;
    padding-right: 6px;
    border-right: 1px solid #333;
}

.tray-item {
    display: flex;
    align-items: center;
    justify-content: center;
}

.w20 {
    width: 20px;
}

.w18 {
    width: 18px;
}

.w26 {
    width: 26px;
}

.clock {
    display: flex;
    flex-direction: column;
    align-items: center;
    width: 54px;
    font-size: 10px;
    line-height: 15px;
    color: #ddd;
}

.tray-notify {
    position: relative;
    display: flex;
    align-items: center;
    width: 42px;
    padding-left: 10px;
}

.notify-badge {
    position: absolute;
    left: 18px;
    top: 7px;
    width: 15px;
    height: 15px;
    border-radius: 50%;
    background: #444;
    font-size: 10px;
    line-height: 15px;
    text-align: center;
    color: #eee;
}
```
